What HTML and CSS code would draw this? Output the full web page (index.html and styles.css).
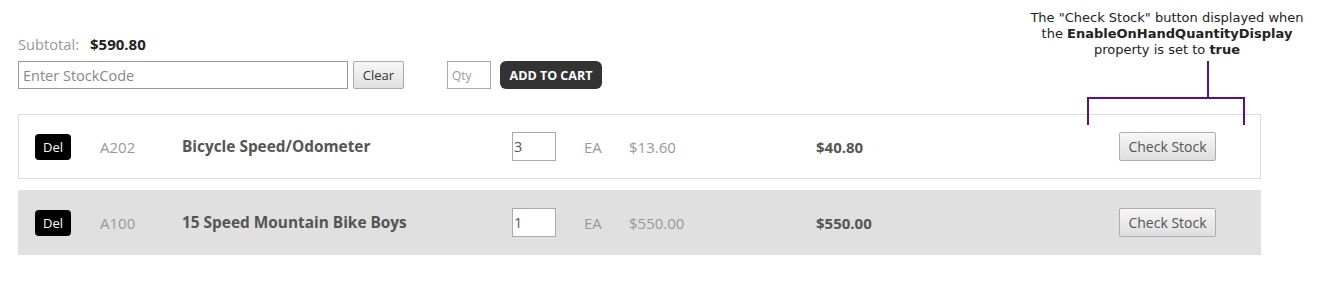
FILE: index.html
```html
<!DOCTYPE html>
<html>
<head>
<meta charset="utf-8">
<link rel="stylesheet" href="styles.css">
</head>
<body>
<div class="page">
  <div class="subtotal"><span class="sub-label">Subtotal:</span><span class="sub-value">$590.80</span></div>
  <div class="toolbar">
    <input class="stock-input" type="text" placeholder="Enter StockCode">
    <button class="btn-clear">Clear</button>
    <input class="qty-input" type="text" placeholder="Qty">
    <button class="btn-add">ADD TO CART</button>
  </div>
  <div class="lines">
    <div class="line line-white">
      <div class="cell"><button class="btn-del">Del</button></div>
      <div class="cell code">A202</div>
      <div class="cell name">Bicycle Speed/Odometer</div>
      <div class="cell"><input class="line-qty" type="text" value="3"></div>
      <div class="cell muted">EA</div>
      <div class="cell muted">$13.60</div>
      <div class="cell total">$40.80</div>
      <div class="cell"><button class="btn-check">Check Stock</button></div>
    </div>
    <div class="line line-grey">
      <div class="cell"><button class="btn-del">Del</button></div>
      <div class="cell code">A100</div>
      <div class="cell name">15 Speed Mountain Bike Boys</div>
      <div class="cell"><input class="line-qty" type="text" value="1"></div>
      <div class="cell muted">EA</div>
      <div class="cell muted">$550.00</div>
      <div class="cell total">$550.00</div>
      <div class="cell"><button class="btn-check">Check Stock</button></div>
    </div>
  </div>
</div>
<div class="note">The "Check Stock" button displayed when<br>the <b>EnableOnHandQuantityDisplay</b><br>property is set to <b>true</b></div>
<div class="bracket-stem"></div>
<div class="bracket"></div>
</body>
</html>
```
FILE: styles.css
```css
html, body {
  margin: 0;
  padding: 0;
  background: #fff;
}
body {
  font-family: "Open Sans", "Liberation Sans", sans-serif;
  position: relative;
  width: 1317px;
  height: 284px;
  overflow: hidden;
}
.page {
  padding: 33px 56px 0 18px;
}
.subtotal {
  height: 21px;
  display: flex;
  align-items: center;
  font-size: 14.7px;
}
.sub-label {
  color: #999;
  width: 72px;
}
.sub-value {
  color: #222;
  font-weight: 700;
  font-size: 15px;
}
.toolbar {
  margin-top: 7px;
  display: flex;
  align-items: center;
  height: 28px;
}
.stock-input {
  box-sizing: border-box;
  width: 330px;
  height: 28px;
  border: 1px solid #999;
  padding: 0 4px;
  font-family: inherit;
  font-size: 14.5px;
  color: #555;
  outline: none;
}
.stock-input::placeholder { color: #888; }
.btn-clear {
  box-sizing: border-box;
  margin-left: 5px;
  width: 51px;
  height: 28px;
  border: 1px solid #aaa;
  border-radius: 2px;
  background: linear-gradient(#f7f7f7, #e0e0e0);
  font-family: inherit;
  font-size: 13px;
  color: #333;
  padding: 0;
}
.qty-input {
  box-sizing: border-box;
  margin-left: 43px;
  width: 44px;
  height: 28px;
  border: 1px solid #aaa;
  padding: 0 4px;
  font-family: inherit;
  font-size: 12px;
  outline: none;
}
.qty-input::placeholder { color: #999; }
.btn-add {
  box-sizing: border-box;
  margin-left: 9px;
  width: 102px;
  height: 28px;
  border: none;
  border-radius: 6px;
  background: #333;
  color: #fff;
  font-family: inherit;
  font-weight: 700;
  font-size: 12.5px;
  padding: 0;
}
.lines {
  margin-top: 25px;
  display: flex;
  flex-direction: column;
  gap: 11px;
}
.line {
  box-sizing: border-box;
  height: 65px;
  display: grid;
  grid-template-columns: 65px 82px 330px 72px 45px 187px 303px auto;
  align-items: center;
  padding-left: 17px;
  font-size: 15px;
}
.line-white {
  border: 1px solid #ddd;
  padding-left: 16px;
}
.line-grey {
  background: #e0e0e0;
}
.cell { line-height: 20px; }
.btn-del {
  display: block;
  box-sizing: border-box;
  width: 36px;
  height: 26px;
  border: none;
  border-radius: 4px;
  background: #000;
  color: #fff;
  font-family: inherit;
  font-size: 13px;
  padding: 0;
}
.code { color: #999; }
.name { color: #555; font-weight: 700; font-size: 15.4px; }
.muted { color: #999; }
.total { color: #555; font-weight: 700; }
.line-qty {
  display: block;
  box-sizing: border-box;
  width: 44px;
  height: 29px;
  border: 1px solid #aaa;
  padding: 0 1px;
  font-family: inherit;
  font-size: 14.5px;
  color: #555;
  background: #fff;
  outline: none;
}
.btn-check {
  display: block;
  box-sizing: border-box;
  width: 97px;
  height: 29px;
  border: 1px solid #adadad;
  border-radius: 2px;
  background: linear-gradient(#f7f7f7, #dedede);
  font-family: inherit;
  font-size: 14px;
  color: #555;
  padding: 0;
}
.note {
  position: absolute;
  left: 1017px;
  top: 10px;
  width: 300px;
  text-align: center;
  font-family: "DejaVu Sans", Verdana, sans-serif;
  font-size: 13px;
  line-height: 16px;
  color: #222;
}
.bracket-stem {
  position: absolute;
  left: 1207px;
  top: 61px;
  width: 2px;
  height: 38px;
  background: #5a0f8c;
}
.bracket {
  position: absolute;
  left: 1087px;
  top: 97px;
  width: 154px;
  height: 26px;
  border: 2px solid #5a0f8c;
  border-bottom: none;
}
```
